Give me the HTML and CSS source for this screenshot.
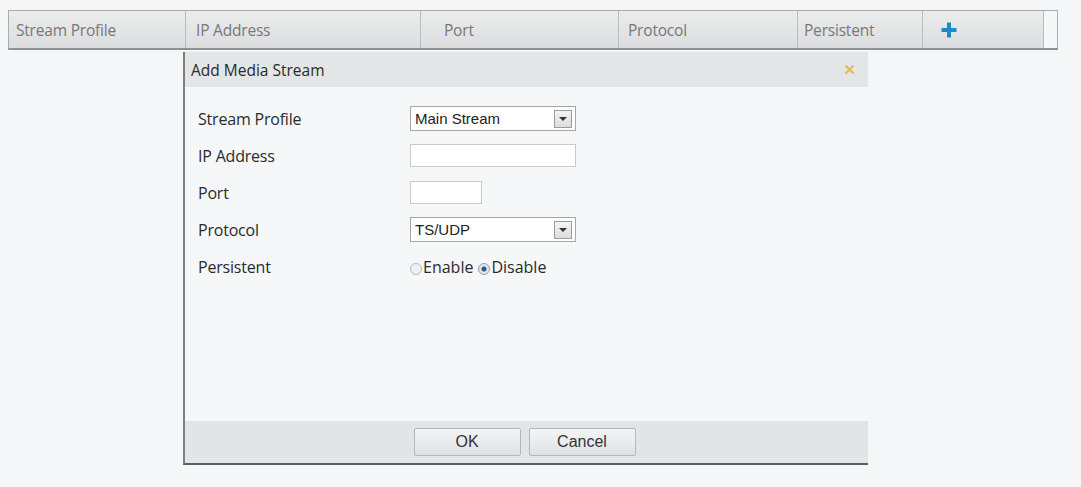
FILE: index.html
```html
<!DOCTYPE html>
<html lang="en">
<head>
    <meta charset="UTF-8">
    <title>Media Stream</title>
    <link rel="stylesheet" href="styles.css">
</head>
<body>
    <div id="wrap">
        <div id="streamTable">
            <div class="col c1">Stream Profile</div>
            <div class="col c2">IP Address</div>
            <div class="col c3">Port</div>
            <div class="col c4">Protocol</div>
            <div class="col c5">Persistent</div>
            <div class="col c6">
                <svg width="18" height="18" viewBox="0 0 18 18"><path d="M9 1.5v15M1.5 9h15" stroke="#1d8cc4" stroke-width="4"/></svg>
            </div>
            <div class="col c7"></div>
        </div>

        <div id="dialog">
            <div class="dlgTitle">
                <span>Add Media Stream</span>
                <svg width="11" height="11" viewBox="0 0 11 11"><path d="M1.5 1.5l8 8M9.5 1.5l-8 8" stroke="#efb655" stroke-width="2.2"/></svg>
            </div>
            <div class="dlgBody">
                <div class="formRow">
                    <label>Stream Profile</label>
                    <div class="selectBox wide"><span>Main Stream</span><div class="arrow"></div></div>
                </div>
                <div class="formRow">
                    <label>IP Address</label>
                    <input class="textBox wide" type="text">
                </div>
                <div class="formRow">
                    <label>Port</label>
                    <input class="textBox short" type="text">
                </div>
                <div class="formRow">
                    <label>Protocol</label>
                    <div class="selectBox wide"><span>TS/UDP</span><div class="arrow"></div></div>
                </div>
                <div class="formRow">
                    <label>Persistent</label>
                    <div class="radios">
                        <span class="radio"></span><span class="rtext">Enable</span>
                        <span class="radio on"></span><span class="rtext">Disable</span>
                    </div>
                </div>
            </div>
            <div class="dlgFoot">
                <div class="btn">OK</div>
                <div class="btn">Cancel</div>
            </div>
        </div>
    </div>
</body>
</html>
```
FILE: styles.css
```css
*{
    margin: 0;
    padding: 0;
    box-sizing: border-box;
}

body{
    background-color: #f4f6f8;
    font-family: "Open Sans", "Noto Sans", sans-serif;
}

#wrap{
    padding: 10px 0 0 8px;
}

#streamTable{
    display: flex;
    width: 1050px;
    height: 40px;
    border: 1px solid #a9abad;
    border-bottom: 2px solid #8e9092;
    background: linear-gradient(#ececec, #dcdddf);
}

.col{
    display: flex;
    align-items: center;
    padding-left: 7px;
    font-size: 15.5px;
    color: #77787a;
    border-right: 1px solid #b9bbbd;
    letter-spacing: -0.2px;
}

.c1{ width: 177px; }
.c2{ width: 235px; padding-left: 10px; }
.c3{ width: 198px; padding-left: 23px; }
.c4{ width: 179px; padding-left: 9px; }
.c5{ width: 125px; padding-left: 6px; }
.c6{ width: 121px; padding-left: 17px; }
.c7{ flex: 1; background: #f6f7f8; border-right: none; }

#dialog{
    margin: 2px 0 0 175px;
    width: 685px;
    height: 413px;
    display: flex;
    flex-direction: column;
    border-left: 2px solid #7d7f81;
    border-bottom: 2px solid #5c5e60;
    background: #f5f7f9;
}

.dlgTitle{
    height: 35px;
    background: #e3e5e7;
    display: flex;
    justify-content: space-between;
    align-items: center;
    padding: 0 13px 0 6px;
    font-size: 15.5px;
    color: #2a2a2a;
}

.dlgBody{
    flex: 1;
    padding: 13px 0 0 13px;
}

.formRow{
    display: grid;
    grid-template-columns: 212px 1fr;
    align-items: center;
    height: 37px;
}

.formRow label{
    font-size: 16px;
    color: #2b2b2b;
    letter-spacing: -0.2px;
}

.selectBox{
    height: 25px;
    border: 1px solid #a4a6a8;
    background: white;
    display: flex;
    justify-content: space-between;
    align-items: center;
    padding: 0 3px 0 4px;
    font-family: "Liberation Sans", Arial, sans-serif;
    font-size: 15px;
    color: #222;
}

.wide{ width: 166px; }
.short{ width: 72px; }

.arrow{
    width: 18px;
    height: 18px;
    border: 1px solid #9a9c9e;
    background: linear-gradient(#f4f4f4, #dcdcdc);
    display: flex;
    justify-content: center;
    align-items: center;
}

.arrow::after{
    content: "";
    border-left: 4px solid transparent;
    border-right: 4px solid transparent;
    border-top: 4px solid #333;
}

.textBox{
    height: 23px;
    border: 1px solid #c8cacc;
    background: white;
    outline: none;
}

.radios{
    display: flex;
    align-items: center;
    font-size: 16px;
    color: #2a2a2a;
}

.radio{
    width: 12px;
    height: 12px;
    border-radius: 50%;
    border: 1px solid #b8babc;
    background: #f0f1f2;
    margin-top: 4px;
}

.radio.on{
    background: radial-gradient(circle, #2f5a86 0, #2f5a86 2px, #dfe5ea 3px);
    border-color: #8ea2b4;
    margin-left: 5px;
}

.rtext{
    margin-left: 1px;
}

.dlgFoot{
    height: 42px;
    background: #e2e4e6;
    display: flex;
    justify-content: center;
    align-items: center;
    gap: 8px;
    padding-right: 4px;
}

.btn{
    width: 107px;
    height: 28px;
    border: 1px solid #b4b6b8;
    border-radius: 2px;
    background: linear-gradient(#f4f5f6, #dfe1e3);
    display: flex;
    justify-content: center;
    align-items: center;
    font-family: "Liberation Sans", Arial, sans-serif;
    font-size: 16px;
    color: #333;
}
```
